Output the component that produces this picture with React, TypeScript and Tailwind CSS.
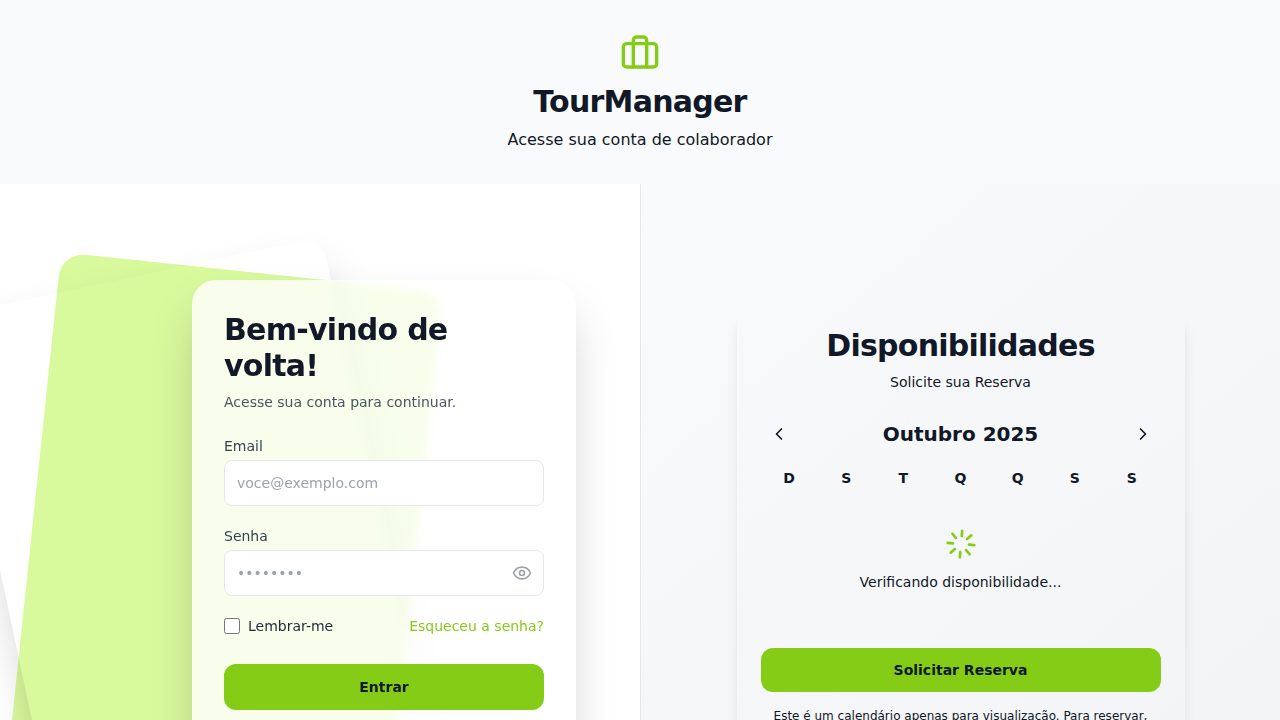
import React from "react";
import { ChevronLeft, ChevronRight, Eye, Loader } from "lucide-react";

const weekdays = ["D", "S", "T", "Q", "Q", "S", "S"];

function SuitcaseIcon() {
  return (
    <svg
      className="size-10 text-[#84cc16]"
      viewBox="0 0 24 24"
      fill="none"
      stroke="currentColor"
      strokeWidth="2"
      strokeLinecap="round"
      strokeLinejoin="round"
    >
      <rect width="20" height="14" x="2" y="7" rx="2" ry="2" />
      <path d="M16 21V5a2 2 0 0 0-2-2h-4a2 2 0 0 0-2 2v16" />
    </svg>
  );
}

function Header() {
  return (
    <header className="flex h-[184px] flex-col items-center bg-[#f9fafb] pt-8">
      <SuitcaseIcon />
      <h1 className="mt-3 text-[30px] leading-9 font-bold tracking-[-0.75px]">TourManager</h1>
      <p className="mt-2 text-base">Acesse sua conta de colaborador</p>
    </header>
  );
}

function LoginCard() {
  return (
    <div className="relative h-[520px] w-96 rounded-3xl bg-white/80 p-8 shadow-2xl backdrop-blur-xs">
      <h2 className="text-[30px] leading-9 font-bold tracking-[-0.75px]">Bem-vindo de volta!</h2>
      <p className="mt-2 text-sm text-[#4b5563]">Acesse sua conta para continuar.</p>
      <form className="mt-6">
        <label className="block text-sm text-[#374151]">Email</label>
        <input
          type="email"
          placeholder="voce@exemplo.com"
          className="mt-1 block h-[46px] w-full rounded-lg border border-[#e5e7eb] bg-white px-3 text-sm placeholder:text-[#9ca3af]"
        />
        <label className="mt-5 block text-sm text-[#374151]">Senha</label>
        <div className="mt-1 flex h-[46px] items-center rounded-lg border border-[#e5e7eb] bg-white px-3">
          <input
            type="password"
            placeholder="••••••••"
            className="min-w-0 flex-1 text-sm outline-none placeholder:text-[#9ca3af]"
          />
          <Eye className="-mr-px size-5 text-[#9ca3af]" />
        </div>
        <div className="mt-5 flex items-center justify-between text-sm">
          <label className="flex items-center text-[#1f2937]">
            <input type="checkbox" className="mr-2 size-4" />
            Lembrar-me
          </label>
          <a className="text-[#84cc16]">Esqueceu a senha?</a>
        </div>
        <button type="button" className="mt-7 h-[46px] w-full rounded-xl bg-[#84cc16] text-sm font-bold">
          Entrar
        </button>
      </form>
    </div>
  );
}

function LoginPanel() {
  return (
    <section className="relative w-[641px] overflow-hidden border-r border-[#e5e7eb] bg-white pt-24 pl-48">
      <div className="absolute top-[87px] left-[33px] h-[520px] w-96 rotate-6 rounded-3xl bg-[#d9f99d]" />
      <div className="absolute top-[87px] left-[-4px] h-[520px] w-96 -rotate-12 rounded-3xl shadow-2xl" />
      <LoginCard />
    </section>
  );
}

function AvailabilityPanel() {
  return (
    <section className="flex flex-1 justify-center bg-linear-to-br from-[#f9fafb] to-[#f3f4f6] pt-32">
      <div className="h-[520px] w-[448px] rounded-xl px-6 pt-4 pb-6 text-center shadow-lg">
        <h2 className="text-[30px] leading-9 font-bold tracking-[-0.75px]">Disponibilidades</h2>
        <p className="mt-2 text-sm">Solicite sua Reserva</p>
        <div className="mt-6 flex h-9 items-center justify-between px-2">
          <ChevronLeft className="size-5" />
          <h3 className="text-xl font-bold">Outubro 2025</h3>
          <ChevronRight className="size-5" />
        </div>
        <div className="mt-4 grid grid-cols-7 text-sm font-bold">
          {weekdays.map((day, i) => (
            <span key={i}>{day}</span>
          ))}
        </div>
        <div className="mt-10 flex h-[120px] flex-col items-center">
          <Loader className="size-8 rotate-5 text-[#84cc16]" />
          <p className="mt-3 text-sm">Verificando disponibilidade...</p>
        </div>
        <button type="button" className="h-11 w-full rounded-xl bg-[#84cc16] text-sm font-bold">
          Solicitar Reserva
        </button>
        <p className="mt-4 text-xs">Este é um calendário apenas para visualização. Para reservar, faça login.</p>
      </div>
    </section>
  );
}

export default function App() {
  return (
    <div className="flex h-screen flex-col overflow-hidden bg-[#f9fafb] font-['DejaVu_Sans',sans-serif] text-[#111827]">
      <Header />
      <main className="flex min-h-0 flex-1 overflow-hidden">
        <LoginPanel />
        <AvailabilityPanel />
      </main>
    </div>
  );
}
